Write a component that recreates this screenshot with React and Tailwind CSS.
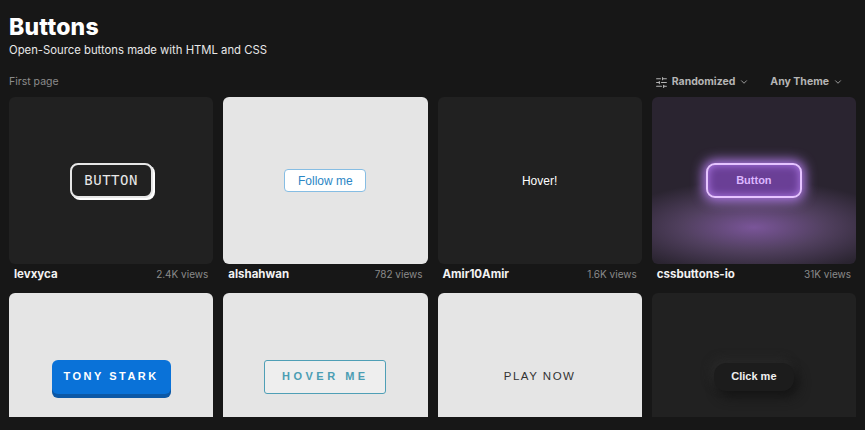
import React from 'react';
import { SlidersHorizontal, ChevronDown } from 'lucide-react';

const font = { fontFamily: 'Inter, "Noto Sans", sans-serif' };
const arial = { fontFamily: '"Liberation Sans", Arial, sans-serif' };

const Card = ({ dark, children, className = '' }) => (
    <div className={`h-[167px] rounded-md flex items-center justify-center overflow-hidden relative ${dark ? 'bg-[#212121]' : 'bg-[#e5e5e5]'} ${className}`}>
        {children}
    </div>
);

const Item = ({ user, views, dark, children, className }) => (
    <div className="flex flex-col">
        <Card dark={dark} className={className}>{children}</Card>
        <div className="flex items-center justify-between h-[19px] mt-[1px] px-[5px]">
            <span className="text-[11.5px] font-bold text-[#f2f2f2]">{user}</span>
            <span className="text-[10px] text-[#8a8a8a]">{views}</span>
        </div>
    </div>
);

const App = () => {
    return (
        <div className="w-[865px] h-[430px] bg-[#171717] text-white overflow-hidden" style={font}>
            <div className="px-[9px] pt-[12px]">
                <h1 className="text-[23px] font-extrabold leading-[30px] tracking-[0.2px]">Buttons</h1>
                <p className="text-[11.3px] text-[#e8e8e8] mt-[0px] leading-[16px]">Open-Source buttons made with HTML and CSS</p>
                <div className="flex items-center justify-between mt-[15px] h-[18px]">
                    <span className="text-[10.5px] text-[#8c8c8c]">First page</span>
                    <div className="flex items-center gap-[21px] pr-[13px] text-[10.5px] font-bold text-[#b5b5b5]">
                        <span className="flex items-center gap-[4px]">
                            <SlidersHorizontal size={13} strokeWidth={2} />
                            Randomized
                            <ChevronDown size={10} strokeWidth={2} />
                        </span>
                        <span className="flex items-center gap-[4px]">
                            Any Theme
                            <ChevronDown size={10} strokeWidth={2} />
                        </span>
                    </div>
                </div>
            </div>
            <div className="h-[320px] overflow-hidden mt-[6px] px-[9px]">
                <div className="grid grid-cols-4 gap-x-[10px] gap-y-[9px]">
                    <Item user="levxyca" views="2.4K views" dark>
                        <button className="h-[35px] w-[83px] rounded-[8px] border-2 border-[#e6e6e6] bg-[#212121] shadow-[2px_2px_0_#ffffff] text-[14px] text-[#e8e8e8] tracking-[0.5px]" style={{ fontFamily: '"DejaVu Sans Mono", monospace' }}>
                            BUTTON
                        </button>
                    </Item>
                    <Item user="alshahwan" views="782 views">
                        <button className="h-[23px] w-[82px] rounded-[4px] border border-[#86bde3] bg-white text-[12px] text-[#2b86c5]" style={arial}>
                            Follow me
                        </button>
                    </Item>
                    <Item user="Amir10Amir" views="1.6K views" dark>
                        <span className="text-[12px] text-white" style={arial}>
                            Hover!
                        </span>
                    </Item>
                    <Item user="cssbuttons-io" views="31K views" className="bg-[radial-gradient(ellipse_70%_28%_at_50%_78%,#7a5599_0%,#51405f_50%,#2a2430_100%)]">
                        <button className="h-[35px] w-[96px] rounded-[9px] border-2 border-[#e6c4ff] bg-[#6a3f96] text-[11px] font-bold text-[#dcb6ff] shadow-[0_0_12px_3px_#b07ae8,inset_0_0_8px_#b07ae8]" style={arial}>
                            Button
                        </button>
                    </Item>
                    <Item user="" views="">
                        <button className="h-[34px] w-[119px] rounded-[6px] bg-[#0a72d8] shadow-[0_4px_0_#0c58a6] text-[11px] font-bold text-white tracking-[2.5px]" style={arial}>
                            TONY STARK
                        </button>
                    </Item>
                    <Item user="" views="">
                        <button className="h-[34px] w-[122px] rounded-[3px] border border-[#4f9fb6] bg-[#eeeeee] text-[11px] font-bold text-[#4b9db3] tracking-[3.5px]" style={arial}>
                            HOVER ME
                        </button>
                    </Item>
                    <Item user="" views="">
                        <span className="text-[11.5px] text-[#333333] tracking-[1.5px]" style={arial}>
                            PLAY NOW
                        </span>
                    </Item>
                    <Item user="" views="" dark>
                        <button className="h-[28px] w-[80px] rounded-[12px] bg-[#1c1c1c] shadow-[4px_6px_12px_#141414,-3px_-4px_10px_#2a2a2a] text-[11px] font-bold text-[#f0f0f0]" style={arial}>
                            Click me
                        </button>
                    </Item>
                </div>
            </div>
        </div>
    );
};

export default App;
